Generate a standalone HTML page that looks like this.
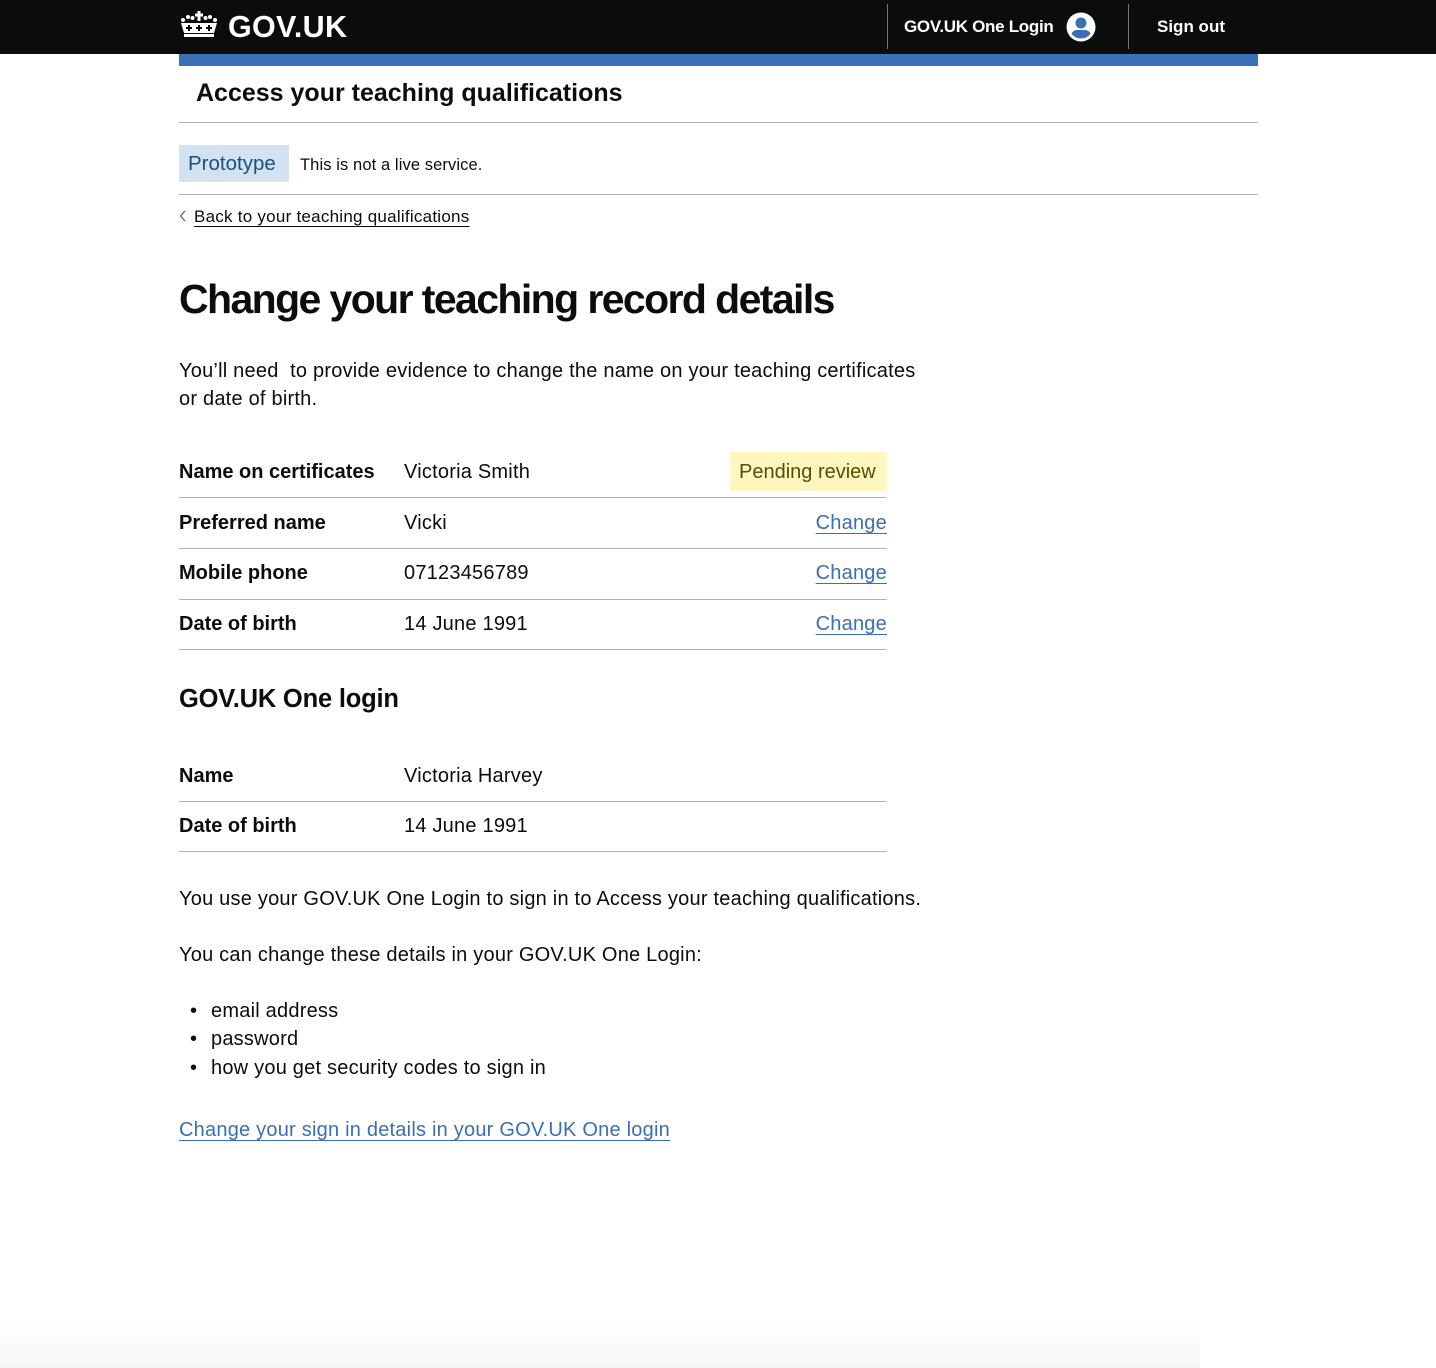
<!DOCTYPE html>
<html><head><meta charset="utf-8">
<style>
*{margin:0;padding:0;box-sizing:border-box}
body{width:1436px;height:1368px;position:relative;background:#fff;font-family:"Liberation Sans",sans-serif;color:#0b0c0c;overflow:hidden}
.t{position:absolute;white-space:nowrap;line-height:30px}
.b{font-weight:bold}
.hr{position:absolute;height:1px;background:#b1b4b6}
a{color:#3a6fb5;text-decoration:underline;text-underline-offset:4px;text-decoration-thickness:1px}
.f19{font-size:20px;letter-spacing:0.22px}
.b.f19{letter-spacing:0}
</style></head><body>
<div style="position:absolute;left:0;top:0;width:1436px;height:54px;background:#0b0c0c"></div>
<svg style="position:absolute;left:179px;top:11px" width="40" height="28" viewBox="0 0 40 28">
<g fill="#fff">
<rect x="18.5" y="0" width="3" height="10"/><rect x="16" y="2.5" width="8" height="3"/>
<circle cx="4" cy="9" r="2"/><circle cx="9" cy="6" r="2"/><circle cx="13.5" cy="7" r="2"/><circle cx="26.5" cy="7" r="2"/><circle cx="31" cy="6" r="2"/><circle cx="36" cy="9" r="2"/>
<path d="M2 12 L38 12 L35 22 L5 22 Z M5 23 H35 V26 H5 Z"/>
</g>
<g fill="#0b0c0c"><rect x="9" y="14" width="2" height="6"/><rect x="7" y="16" width="6" height="2"/><rect x="19" y="14" width="2" height="6"/><rect x="17" y="16" width="6" height="2"/><rect x="29" y="14" width="2" height="6"/><rect x="27" y="16" width="6" height="2"/></g>
</svg>
<div class="t b" style="left:228px;top:12px;color:#fff;font-size:30.5px;letter-spacing:0.3px">GOV.UK</div>
<div style="position:absolute;left:887px;top:4px;width:1px;height:45px;background:#6f777b"></div>
<div class="t b" style="left:904px;top:12px;color:#fff;font-size:17px;letter-spacing:-0.3px">GOV.UK One Login</div>
<svg style="position:absolute;left:1066px;top:12px" width="30" height="30" viewBox="0 0 30 30"><circle cx="15" cy="15" r="14.5" fill="#fff"/><circle cx="15" cy="11" r="5.5" fill="#3a6fb5"/><path d="M5.5 22 Q7 18 11 18 H19 Q23 18 24.5 22 Q20.5 26.5 15 26.5 Q9.5 26.5 5.5 22Z" fill="#3a6fb5"/></svg>
<div style="position:absolute;left:1128px;top:4px;width:1px;height:45px;background:#6f777b"></div>
<div class="t b" style="left:1157px;top:12px;color:#fff;font-size:17px">Sign out</div>
<div style="position:absolute;left:179px;top:54px;width:1079px;height:12px;background:#3a70b7"></div>
<div class="t b" style="left:196px;top:78px;font-size:25px;letter-spacing:0px">Access your teaching qualifications</div>
<div class="hr" style="left:179px;top:122px;width:1079px"></div>
<div style="position:absolute;left:179px;top:145px;width:110px;height:37px;background:#d2e2f1"></div>
<div class="t" style="left:188px;top:149px;font-size:20.5px;color:#1d4f7d">Prototype</div>
<div class="t" style="left:300px;top:150px;font-size:16.5px;letter-spacing:0.1px">This is not a live service.</div>
<div class="hr" style="left:179px;top:194px;width:1079px"></div>
<svg style="position:absolute;left:179px;top:210px" width="8" height="12"><path d="M6 1 L1.5 6 L6 11" stroke="#505a5f" stroke-width="1.2" fill="none"/></svg>
<div class="t" style="left:194px;top:202px;font-size:17px;letter-spacing:0.25px;text-decoration:underline;text-underline-offset:4px">Back to your teaching qualifications</div>
<div class="t b" style="left:179px;top:276px;font-size:41px;line-height:46px;letter-spacing:-1.6px">Change your teaching record details</div>
<div class="t f19" style="left:179px;top:356px">You’ll need&nbsp; to provide evidence to change the name on your teaching certificates</div>
<div class="t f19" style="left:179px;top:384px">or date of birth.</div>

<div style="position:absolute;left:730px;top:452px;width:157px;height:39px;background:#fff7bf"></div>
<div class="t f19" style="left:739px;top:457px;color:#594d00;letter-spacing:0">Pending review</div>

<div class="t b f19" style="left:179px;top:457px">Name on certificates</div>
<div class="t f19" style="left:404px;top:457px">Victoria Smith</div>
<div class="hr" style="left:179px;top:497px;width:708px"></div>
<div class="t b f19" style="left:179px;top:508px">Preferred name</div>
<div class="t f19" style="left:404px;top:508px">Vicki</div>
<div class="t f19" style="right:549px;top:508px"><a>Change</a></div>
<div class="hr" style="left:179px;top:548px;width:708px"></div>
<div class="t b f19" style="left:179px;top:558px">Mobile phone</div>
<div class="t f19" style="left:404px;top:558px">07123456789</div>
<div class="t f19" style="right:549px;top:558px"><a>Change</a></div>
<div class="hr" style="left:179px;top:599px;width:708px"></div>
<div class="t b f19" style="left:179px;top:609px">Date of birth</div>
<div class="t f19" style="left:404px;top:609px">14 June 1991</div>
<div class="t f19" style="right:549px;top:609px"><a>Change</a></div>
<div class="hr" style="left:179px;top:649px;width:708px"></div>

<div class="t b" style="left:179px;top:684px;font-size:25.5px;letter-spacing:-0.2px">GOV.UK One login</div>
<div class="t b f19" style="left:179px;top:761px">Name</div>
<div class="t f19" style="left:404px;top:761px">Victoria Harvey</div>
<div class="hr" style="left:179px;top:801px;width:708px"></div>
<div class="t b f19" style="left:179px;top:811px">Date of birth</div>
<div class="t f19" style="left:404px;top:811px">14 June 1991</div>
<div class="hr" style="left:179px;top:851px;width:708px"></div>

<div class="t f19" style="left:179px;top:884px">You use your GOV.UK One Login to sign in to Access your teaching qualifications.</div>
<div class="t f19" style="left:179px;top:940px">You can change these details in your GOV.UK One Login:</div>
<div class="t f19" style="left:190px;top:996px">•</div><div class="t f19" style="left:211px;top:996px">email address</div>
<div class="t f19" style="left:190px;top:1024px">•</div><div class="t f19" style="left:211px;top:1024px">password</div>
<div class="t f19" style="left:190px;top:1053px">•</div><div class="t f19" style="left:211px;top:1053px">how you get security codes to sign in</div>
<div class="t f19" style="left:179px;top:1115px"><a>Change your sign in details in your GOV.UK One login</a></div>
<div style="position:absolute;left:0;top:1320px;width:1200px;height:48px;background:linear-gradient(#fff,#f6f6f6)"></div>
</body></html>
